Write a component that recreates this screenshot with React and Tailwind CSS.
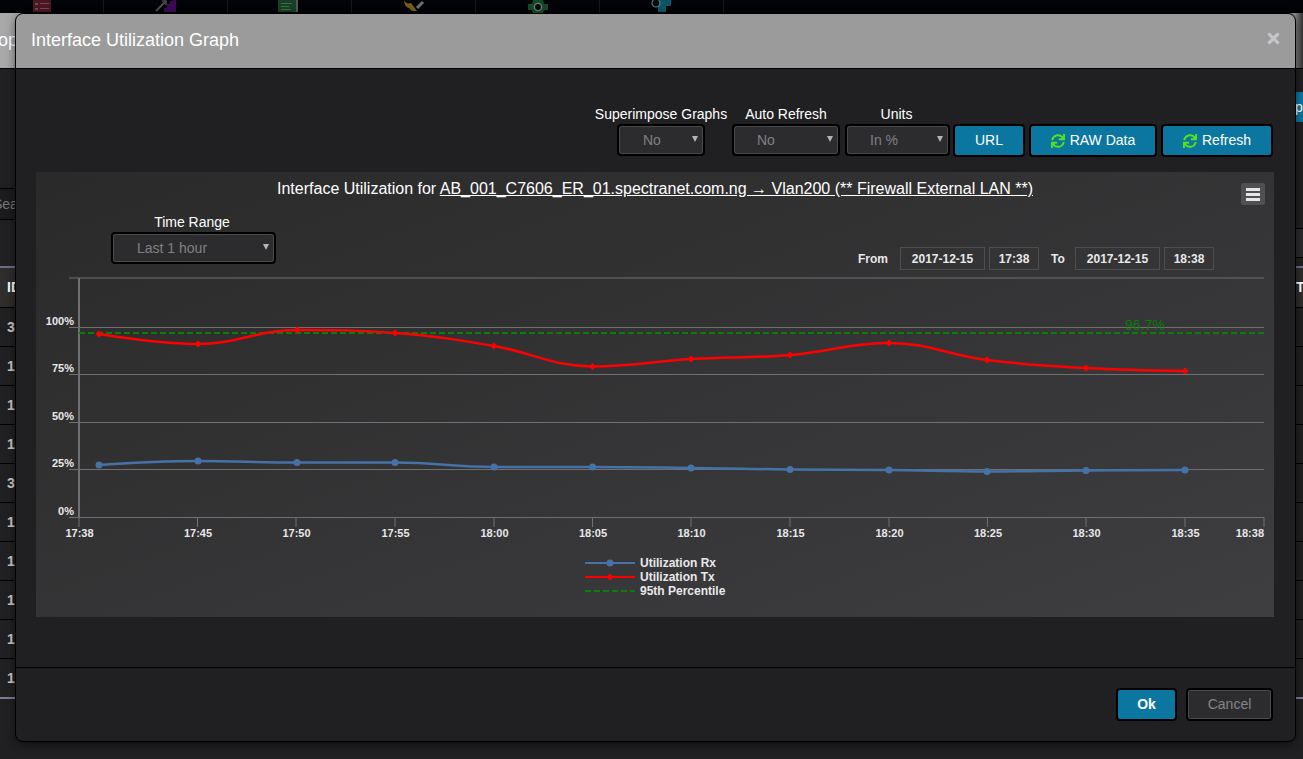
import React from 'react';
import { FaSync, FaTimes } from 'react-icons/fa';

const xs = [99, 198, 297, 395, 494, 592.5, 691, 790, 889, 987, 1086, 1185];
const rx = [465, 461, 462.5, 462.5, 467, 467, 468, 469.5, 470, 471.5, 470.5, 470];
const tx = [334, 344, 330, 333, 346, 366.5, 359, 355, 343, 360, 368, 371];
const ticks = [
  [79, '17:38'], [197.5, '17:45'], [296, '17:50'], [395, '17:55'], [494, '18:00'], [592.5, '18:05'],
  [691, '18:10'], [790, '18:15'], [889, '18:20'], [987.5, '18:25'], [1086, '18:30'], [1185, '18:35'],
];
const yLabels = [[325, '100%'], [372, '75%'], [420, '50%'], [467, '25%'], [515, '0%']];
const gridLines = [278, 327.5, 374.5, 422.5, 469.5];
const rowValues = ['3', '1', '1', '1', '3', '1', '1', '1', '1', '1'];

// same smoothing the chart lib uses for spline series
function splinePath(px, py) {
  const pts = px.map((x, i) => {
    if (i === 0 || i === px.length - 1) return { x, y: py[i], lx: x, ly: py[i], rx: x, ry: py[i] };
    const lastX = px[i - 1], lastY = py[i - 1], nextX = px[i + 1], nextY = py[i + 1], y = py[i];
    let lx = (1.5 * x + lastX) / 2.5, ly = (1.5 * y + lastY) / 2.5;
    let rX = (1.5 * x + nextX) / 2.5, rY = (1.5 * y + nextY) / 2.5;
    const ld = Math.hypot(lx - x, ly - y), rd = Math.hypot(rX - x, rY - y);
    const midX = (lx * rd + rX * ld) / (ld + rd), midY = (ly * rd + rY * ld) / (ld + rd);
    lx += x - midX; ly += y - midY; rX += x - midX; rY += y - midY;
    if (ly > lastY && ly > y) { ly = Math.max(lastY, y); rY = 2 * y - ly; }
    else if (ly < lastY && ly < y) { ly = Math.min(lastY, y); rY = 2 * y - ly; }
    if (rY > nextY && rY > y) { rY = Math.max(nextY, y); ly = 2 * y - rY; }
    else if (rY < nextY && rY < y) { rY = Math.min(nextY, y); ly = 2 * y - rY; }
    return { x, y, lx, ly, rx: rX, ry: rY };
  });
  let d = `M${pts[0].x} ${pts[0].y}`;
  for (let i = 1; i < pts.length; i++) {
    d += ` C${pts[i - 1].rx} ${pts[i - 1].ry} ${pts[i].lx} ${pts[i].ly} ${pts[i].x} ${pts[i].y}`;
  }
  return d;
}

const NavIcons = () => (
  <div className="flex h-[13px] bg-[#020306] overflow-hidden -ml-[20px] shrink-0">
    <div className="w-[124px] h-[13px] shrink-0 flex justify-center border-r border-[#16171a]">
      <svg width="20" height="13" viewBox="0 0 20 13">
        <rect x="1" y="0" width="18" height="12" fill="#4c1522" />
        <rect x="3" y="3" width="3" height="2" fill="#6e4a52" />
        <rect x="8" y="3" width="9" height="1" fill="#6e4a52" />
        <rect x="3" y="8" width="3" height="2" fill="#6e4a52" />
        <rect x="8" y="8" width="9" height="1" fill="#6e4a52" />
      </svg>
    </div>
    <div className="w-[124px] h-[13px] shrink-0 flex justify-center border-r border-[#16171a]">
      <svg width="24" height="13" viewBox="0 0 24 13">
        <path d="M10 12V8h3V4h3V1h3V0h3v12z" fill="#3c0a55" />
        <path d="M2 11 11 2" stroke="#4c4c4c" strokeWidth="2" fill="none" />
        <path d="M8 1h4v4" stroke="#4c4c4c" strokeWidth="1.5" fill="none" />
      </svg>
    </div>
    <div className="w-[124px] h-[13px] shrink-0 flex justify-center border-r border-[#16171a] pr-[3px]">
      <svg width="20" height="13" viewBox="0 0 20 13">
        <rect x="0" y="0" width="18" height="12" fill="#173f26" />
        <rect x="18" y="0" width="2" height="12" fill="#555" />
        <rect x="3" y="3" width="11" height="1" fill="#3f6a4c" />
        <rect x="3" y="6" width="8" height="1" fill="#3f6a4c" />
        <rect x="3" y="9" width="10" height="1" fill="#3f6a4c" />
      </svg>
    </div>
    <div className="w-[124px] h-[13px] shrink-0 flex justify-center border-r border-[#16171a]">
      <svg width="22" height="13" viewBox="0 0 22 13">
        <path d="M1 0c1 3 4 4 7 3l6 8h-5L6 8C4 8 1 5 1 0z" fill="#7a5c17" />
        <path d="M14 8 20 2" stroke="#6e6e6e" strokeWidth="3" fill="none" />
      </svg>
    </div>
    <div className="w-[124px] h-[13px] shrink-0 flex justify-center border-r border-[#16171a]">
      <svg width="22" height="13" viewBox="0 0 22 13">
        <path d="M1 4h4l1-4h10l1 4h4v6h-4l-1 3H6l-1-3H1z" fill="#124a28" />
        <circle cx="11" cy="7" r="3.6" fill="#0a0a0a" stroke="#777" strokeWidth="1.3" />
      </svg>
    </div>
    <div className="w-[124px] h-[13px] shrink-0 flex justify-center border-r border-[#16171a]">
      <svg width="22" height="13" viewBox="0 0 22 13">
        <path d="M6 0h14v6h-5v6H7V6z" fill="#0c5566" />
        <circle cx="5" cy="3" r="4" fill="#0a0a0a" stroke="#4f7f88" strokeWidth="1.2" />
      </svg>
    </div>
  </div>
);

const PageBehind = () => (
  <div className="w-[1303px] h-[759px] bg-[#202022] overflow-hidden flex flex-col text-[#ccc]">
    <NavIcons />
    <div className="h-[56px] shrink-0 border-b border-black bg-gradient-to-r from-[#a8a8a8] via-[#8a8a8a] via-[99.4%] to-[#303030] flex items-center">
      <span className="-ml-[11px] text-[18px] text-white">Top</span>
    </div>
    <div className="h-[23px] shrink-0" />
    <div className="h-[30px] shrink-0 flex justify-end">
      <div className="w-[8px] bg-[#0b76a0] text-white text-[14px] leading-[30px] overflow-hidden">p</div>
    </div>
    <div className="h-[66px] shrink-0" />
    <div className="h-[32px] shrink-0 bg-[#1b1b1d] border-y border-black text-[#777] text-[14px] leading-[30px] w-[15px] overflow-hidden">
      <span className="block -ml-[7px]">Search</span>
    </div>
    <div className="h-[8px] shrink-0" />
    <div className="h-[30px] shrink-0 flex justify-end">
      <div className="w-[8px] bg-[#2a2a2c] border-y border-black" />
    </div>
    <div className="h-[8px] shrink-0" />
    <div className="shrink-0 border-t-2 border-[#6d6f85] h-[42px] bg-[#2f2c2c] border-b border-b-black flex justify-between items-center font-bold text-white text-[14px] pl-[7px]">
      <span>ID</span>
      <span className="w-[7px] overflow-hidden">T</span>
    </div>
    {rowValues.map((v, i) => (
      <div
        key={i}
        className={i === rowValues.length - 1
          ? 'h-[38px] shrink-0 flex items-center pl-[7px] text-[14px] font-bold text-[#c8c8c8]'
          : 'h-[39px] shrink-0 border-b border-black flex items-center pl-[7px] text-[14px] font-bold text-[#c8c8c8]'}
      >
        {v}
      </div>
    ))}
    <div className="h-[2px] shrink-0 bg-[#7b7d95]" />
  </div>
);

const DarkSelect = ({ value, widthClass, padClass }) => (
  <div className={`relative h-[32px] rounded-[4px] border-2 border-black ${widthClass}`}>
    <select
      defaultValue={value}
      className={`appearance-none w-full h-full rounded-[3px] bg-[#2c2c2e] border border-[#4a4a4c] text-[14px] text-[#808082] outline-none ${padClass}`}
    >
      <option>{value}</option>
    </select>
    <span className="absolute right-[5px] top-[10px] w-0 h-0 border-x-[3px] border-x-transparent border-t-[6px] border-t-[#b4b4b6]" />
  </div>
);

const BlueButton = ({ widthClass, children }) => (
  <button className={`h-[33px] rounded-[4px] border-2 border-black bg-[#0b76a0] text-white text-[14px] flex items-center justify-center gap-[5px] ${widthClass}`}>
    {children}
  </button>
);

const DateBox = ({ widthClass, children }) => (
  <div className={`h-[23px] border border-[#4e4e50] text-[12px] font-bold text-[#e8e8ea] flex items-center justify-center ${widthClass}`}>
    {children}
  </div>
);

const Chart = () => (
  <svg className="block" width="1238" height="347" viewBox="36 270 1238 347" style={{ fontFamily: '"Liberation Sans", Arial, sans-serif' }}>
    {gridLines.map((y) => (
      <line key={y} x1="69" x2="1264" y1={y} y2={y} stroke="#707073" strokeWidth="1" />
    ))}
    <line x1="69" x2="1264" y1="517.5" y2="517.5" stroke="#707073" strokeWidth="1" />
    <line x1="79" x2="79" y1="278" y2="517" stroke="#707073" strokeWidth="2" />
    {ticks.map(([x, label]) => (
      <g key={label}>
        <line x1={x} x2={x} y1="517" y2="527" stroke="#707073" strokeWidth="1" />
        <text x={x + 0.5} y="536.5" textAnchor="middle" fontSize="11" fontWeight="700" fill="#e8e8ea">{label}</text>
      </g>
    ))}
    <line x1="1264" x2="1264" y1="517" y2="527" stroke="#707073" strokeWidth="1" />
    <text x="1264" y="536.5" textAnchor="end" fontSize="11" fontWeight="700" fill="#e8e8ea">18:38</text>
    {yLabels.map(([y, label]) => (
      <text key={label} x="74" y={y} textAnchor="end" fontSize="11" fontWeight="700" fill="#e8e8ea">{label}</text>
    ))}

    <path d={splinePath(xs, rx)} fill="none" stroke="#4572a7" strokeWidth="2.5" />
    {xs.map((x, i) => <circle key={x} cx={x} cy={rx[i]} r="3.5" fill="#4572a7" />)}

    <line x1="79" x2="1264" y1="333" y2="333" stroke="#0a7d0a" strokeWidth="2" strokeDasharray="6 3" />
    <text x="1125" y="330" fontSize="14" fill="#0a7a0a">96.7%</text>

    <path d={splinePath(xs, tx)} fill="none" stroke="#ff0000" strokeWidth="2.5" />
    {xs.map((x, i) => (
      <path key={x} d={`M${x} ${tx[i] - 3.5}L${x + 3.5} ${tx[i]}L${x} ${tx[i] + 3.5}L${x - 3.5} ${tx[i]}Z`} fill="#ff0000" />
    ))}

    <line x1="585" x2="635" y1="563" y2="563" stroke="#4572a7" strokeWidth="2" />
    <circle cx="610" cy="563" r="3.5" fill="#4572a7" />
    <line x1="585" x2="635" y1="577" y2="577" stroke="#ff0000" strokeWidth="2" />
    <path d="M610 573.5L613.5 577L610 580.5L606.5 577Z" fill="#ff0000" />
    <line x1="585" x2="635" y1="591" y2="591" stroke="#0a7d0a" strokeWidth="2" strokeDasharray="6 3" />
    <text x="640" y="567" fontSize="12" fontWeight="700" fill="#e8e8ea">Utilization Rx</text>
    <text x="640" y="581" fontSize="12" fontWeight="700" fill="#e8e8ea">Utilization Tx</text>
    <text x="640" y="595" fontSize="12" fontWeight="700" fill="#e8e8ea">95th Percentile</text>
  </svg>
);

const App = () => {
  return (
    <div className="relative w-[1303px] h-[759px] overflow-hidden font-['Liberation_Sans',Arial,sans-serif]">
      <PageBehind />

      {/* Modal */}
      <div className="absolute left-[15px] top-[13px] w-[1281px] h-[729px] rounded-[8px] border border-black bg-[#202022] overflow-hidden flex flex-col shadow-[0_3px_9px_rgba(0,0,0,0.5)]">
        <div className="h-[55px] shrink-0 bg-[#9b9b9b] border-b border-black flex items-center justify-between pl-[15px] pr-[13px]">
          <h4 className="text-[18px] text-white -mt-[2px]">Interface Utilization Graph</h4>
          <FaTimes className="text-[#c6c6ca] -mt-[6px]" size={17} />
        </div>

        <div className="flex-1 flex flex-col px-[20px]">
          {/* Toolbar */}
          <div className="h-[103px] shrink-0 flex justify-end items-end pb-[15px] pr-[2px]">
            <div className="w-[132px] flex flex-col items-center mb-[1px]">
              <label className="text-[14px] text-white leading-[20px] whitespace-nowrap">Superimpose Graphs</label>
              <DarkSelect value="No" widthClass="w-[88px]" padClass="pl-[23px]" />
            </div>
            <div className="w-[108px] ml-[5px] flex flex-col items-center mb-[1px]">
              <label className="text-[14px] text-white leading-[20px] whitespace-nowrap">Auto Refresh</label>
              <DarkSelect value="No" widthClass="w-[108px]" padClass="pl-[22px]" />
            </div>
            <div className="w-[105px] ml-[5px] flex flex-col items-center mb-[1px]">
              <label className="text-[14px] text-white leading-[20px] mr-[2px]">Units</label>
              <DarkSelect value="In %" widthClass="w-[105px]" padClass="pl-[22px]" />
            </div>
            <BlueButton widthClass="w-[72px] ml-[3px]">URL</BlueButton>
            <BlueButton widthClass="w-[128px] ml-[4px]">
              <FaSync className="text-[#58e01a]" size={14} /> RAW Data
            </BlueButton>
            <BlueButton widthClass="w-[112px] ml-[4px]">
              <FaSync className="text-[#58e01a]" size={14} /> Refresh
            </BlueButton>
          </div>

          {/* Chart panel */}
          <div className="relative w-[1238px] h-[445px] shrink-0 bg-gradient-to-br from-[#2a2a2b] to-[#3e3e40]">
            <div className="h-[34px] text-center text-[16px] text-white leading-[33px]">
              Interface Utilization for <span className="underline">AB_001_C7606_ER_01.spectranet.com.ng → Vlan200 (** Firewall External LAN **)</span>
            </div>
            <button className="absolute right-[9px] top-[11px] w-[24px] h-[22px] rounded-[2px] bg-[#505053] flex flex-col items-center justify-center gap-[2px]">
              <span className="block w-[14px] h-[3px] bg-[#e6e6e6]" />
              <span className="block w-[14px] h-[3px] bg-[#e6e6e6]" />
              <span className="block w-[14px] h-[3px] bg-[#e6e6e6]" />
            </button>

            <div className="h-[64px] flex justify-between">
              <div className="ml-[75px] w-[165px] pt-[6px] flex flex-col items-center">
                <label className="text-[14px] text-white leading-[20px] mr-[3px]">Time Range</label>
                <DarkSelect value="Last 1 hour" widthClass="w-[165px]" padClass="pl-[23px]" />
              </div>
              <div className="pt-[41px] pr-[60px] flex items-center text-[12px] font-bold text-[#e8e8ea]">
                <span className="mr-[12px]">From</span>
                <DateBox widthClass="w-[85px]">2017-12-15</DateBox>
                <DateBox widthClass="w-[50px] ml-[4px]">17:38</DateBox>
                <span className="w-[12px] ml-[12px] mr-[12px]">To</span>
                <DateBox widthClass="w-[85px]">2017-12-15</DateBox>
                <DateBox widthClass="w-[50px] ml-[4px]">18:38</DateBox>
              </div>
            </div>

            <Chart />
          </div>

          <div className="flex-1" />
        </div>

        <div className="h-[74px] shrink-0 border-t border-black flex items-start justify-end gap-[9px] pt-[20px] pr-[22px]">
          <button className="w-[61px] h-[33px] rounded-[4px] border-2 border-black bg-[#0b76a0] text-white text-[14px] font-bold">Ok</button>
          <button className="w-[87px] h-[33px] rounded-[4px] border-2 border-black bg-[#2c2c2e] text-[#858587] text-[14px] shadow-[inset_0_0_0_1px_#4a4a4c]">Cancel</button>
        </div>
      </div>
    </div>
  );
};

export default App;
